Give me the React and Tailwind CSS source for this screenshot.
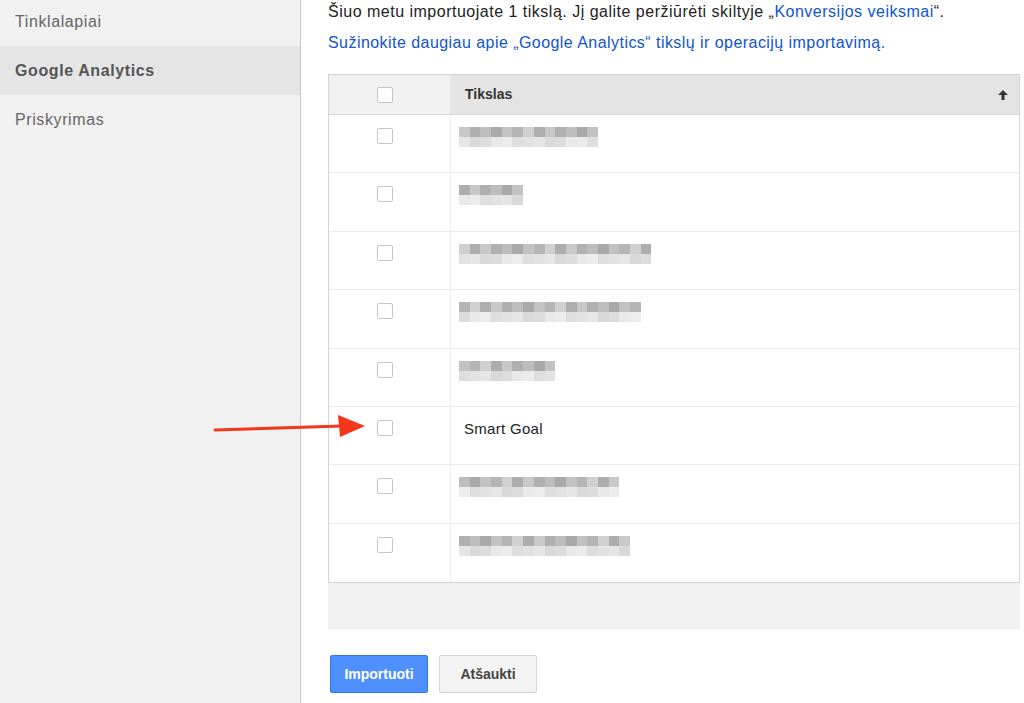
import React from "react";

const navItems = [
  { label: "Tinklalapiai", active: false },
  { label: "Google Analytics", active: true },
  { label: "Priskyrimas", active: false },
];

// blurred goal names: number of pixel blocks per row
const rows = [
  { blocks: 13 },
  { blocks: 6 },
  { blocks: 18 },
  { blocks: 17 },
  { blocks: 9 },
  { name: "Smart Goal" },
  { blocks: 15 },
  { blocks: 16 },
];

const topShades = ["#c9c9c9", "#b5b5b5", "#bdbdbd", "#adadad", "#c2c2c2", "#b0b0b0", "#d0d0d0", "#a9a9a9"];
const bottomShades = ["#e6e6e6", "#dedede", "#e9e9e9", "#d9d9d9", "#e2e2e2", "#ececec", "#dcdcdc"];

const Checkbox = () => (
  <span className="block h-4 w-4 rounded-[2px] border border-[#c6c6c6] bg-white" />
);

const Pixelated = ({ count, seed }) => {
  const cells = Array.from({ length: count });
  return (
    <div className="flex flex-col">
      <div className="flex">
        {cells.map((_, i) => (
          <span
            key={i}
            className="block h-[10px] w-[10.7px]"
            style={{ background: topShades[(i * 5 + seed * 3) % topShades.length] }}
          />
        ))}
      </div>
      <div className="flex">
        {cells.map((_, i) => (
          <span
            key={i}
            className="block h-[10px] w-[10.7px]"
            style={{ background: bottomShades[(i * 3 + seed * 2) % bottomShades.length] }}
          />
        ))}
      </div>
    </div>
  );
};

const App = () => {
  return (
    <div
      className="relative flex h-[703px] w-[1024px] overflow-hidden bg-white"
      style={{ fontFamily: '"Liberation Sans", Arial, sans-serif' }}
    >
      <aside className="w-[301px] shrink-0 border-r border-[#c8c8c8] bg-[#f1f1f1]">
        <div className="-mt-[3px]">
          {navItems.map((item) => (
            <div
              key={item.label}
              className={`flex h-[49px] items-center pl-[15px] text-[16px] tracking-[0.6px] ${
                item.active ? "bg-[#e5e5e5] font-bold text-[#555]" : "text-[#666]"
              }`}
            >
              {item.label}
            </div>
          ))}
        </div>
      </aside>

      <main className="flex-1 pl-[27px]">
        <p className="mt-[3px] text-[16px] leading-[18px] tracking-[0.5px] text-[#222]">
          Šiuo metu importuojate 1 tikslą. Jį galite peržiūrėti skiltyje „
          <span className="text-[#1155cc]">Konversijos veiksmai</span>“.
        </p>
        <p className="mt-[13px] text-[16px] leading-[18px] tracking-[0.45px] text-[#1155cc]">
          Sužinokite daugiau apie „Google Analytics“ tikslų ir operacijų importavimą.
        </p>

        <div className="mt-[22px] w-[692px] border border-[#d4d4d4]">
          <div className="flex h-[40px] border-b border-[#d9d9d9]">
            <div className="flex w-[122px] items-center border-r border-[#e8e8e8] bg-[#f1f1f1] pl-[48px]">
              <Checkbox />
            </div>
            <div className="flex flex-1 items-center justify-between bg-[#e4e4e4] pl-[14px] pr-[10px]">
              <span className="text-[14px] font-bold text-[#333]">Tikslas</span>
              <svg width="12" height="12" viewBox="0 0 12 12">
                <path d="M6 1 L11 6 L7.5 6 L7.5 11 L4.5 11 L4.5 6 L1 6 Z" fill="#333" />
              </svg>
            </div>
          </div>

          {rows.map((row, i) => (
            <div
              key={i}
              className={`flex h-[58.4px] ${i < rows.length - 1 ? "border-b border-[#ebebeb]" : ""}`}
            >
              <div className="flex w-[122px] items-start border-r border-[#f0f0f0] pl-[48px] pt-[13px]">
                <Checkbox />
              </div>
              <div className="flex flex-1 items-start pl-[8px] pt-[12px]">
                {row.name ? (
                  <span className="pl-[5px] pt-[1px] text-[15px] leading-[17px] tracking-[0.3px] text-[#222]">
                    {row.name}
                  </span>
                ) : (
                  <Pixelated count={row.blocks} seed={i} />
                )}
              </div>
            </div>
          ))}
        </div>

        <div className="h-[46px] w-[692px] bg-[#f1f1f1]" />

        <div className="mt-[26px] flex gap-[11px] pl-[2px]">
          <button className="h-[38px] w-[98px] rounded-[2px] border border-[#3079ed] bg-[#4d90fe] text-[14px] font-bold text-white">
            Importuoti
          </button>
          <button className="h-[38px] w-[98px] rounded-[2px] border border-[#d6d6d6] bg-[#f3f3f3] text-[14px] font-bold text-[#444]">
            Atšaukti
          </button>
        </div>
      </main>

      {/* annotation arrow */}
      <svg
        className="absolute left-[212px] top-[414px]"
        width="156"
        height="26"
        viewBox="0 0 156 26"
      >
        <path d="M3 16 L130 12" stroke="#f4361c" strokeWidth="3" strokeLinecap="round" />
        <path d="M126 1 L153 12 L128 23 Z" fill="#f4361c" />
      </svg>
    </div>
  );
};

export default App;
